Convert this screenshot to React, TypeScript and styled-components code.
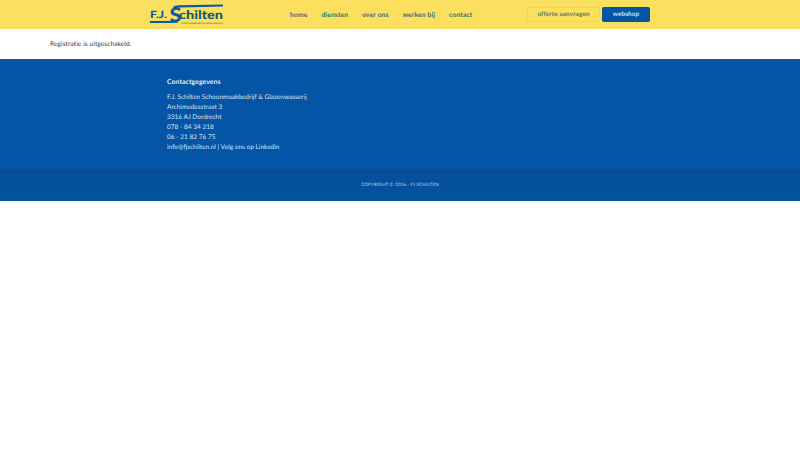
import React from 'react';
import styled, { createGlobalStyle } from 'styled-components';

const GlobalStyle = createGlobalStyle`
  html, body {
    margin: 0;
    padding: 0;
    background: #fff;
    font-family: "Lato", sans-serif;
    text-rendering: geometricPrecision;
  }
`;

const Header = styled.header`
  height: 29px;
  background: #fbe060;
  display: flex;
  justify-content: center;
`;

const HeaderInner = styled.div`
  width: 500px;
  display: flex;
  align-items: center;
`;

const LogoWrap = styled.a`
  display: block;
  width: 74px;
  height: 24px;
  margin-bottom: 1px;
`;

const Nav = styled.nav`
  display: flex;
  gap: 14px;
  margin-left: 66px;
`;

const NavLink = styled.a`
  font-size: 6.7px;
  font-weight: 700;
  letter-spacing: 0.15px;
  color: #33706f;
  white-space: nowrap;
`;

const Actions = styled.div`
  display: flex;
  gap: 2px;
  margin-left: auto;
`;

const ActionButton = styled.a<{ $primary?: boolean }>`
  width: ${(p) => (p.$primary ? '48px' : '73px')};
  height: 15px;
  display: flex;
  align-items: center;
  justify-content: center;
  border-radius: 2px;
  font-size: 6.4px;
  letter-spacing: 0.1px;
  font-weight: 700;
  white-space: nowrap;
  color: ${(p) => (p.$primary ? '#d5e3f1' : '#4f7a62')};
  background: ${(p) => (p.$primary ? '#0455a5' : 'transparent')};
  outline: ${(p) => (p.$primary ? 'none' : '1px solid #f3d658')};
  outline-offset: -1px;
`;

const Content = styled.main`
  height: 30px;
  padding-left: 50px;
  display: flex;
  align-items: center;
  font-size: 6.6px;
  letter-spacing: 0.07px;
  color: #3c3c3c;
`;

const Footer = styled.footer`
  background: #0455a5;
  height: 110px;
  padding: 18px 0 0 167px;
  box-sizing: border-box;
  color: #d5e3f1;
`;

const FooterTitle = styled.div`
  font-size: 6.8px;
  font-weight: 700;
  letter-spacing: 0.1px;
  line-height: 10px;
  color: #e6eff7;
  margin-bottom: 6px;
`;

const FooterLine = styled.div`
  font-size: 6.5px;
  line-height: 10px;
`;

const CopyrightBar = styled.div`
  height: 32px;
  padding-bottom: 1px;
  box-sizing: border-box;
  background: linear-gradient(#044d98, #0553a1);
  display: flex;
  align-items: center;
  justify-content: center;
  font-size: 4.5px;
  letter-spacing: 0.2px;
  color: #c2d7eb;
`;

function Logo() {
  return (
    <LogoWrap>
      <svg width="74" height="24" viewBox="0 0 74 24">
        <path d="M23 5 Q 25 3.5 29 3.2 L73 2.6 L73 4.4 L30 5.4 Q 26 5.8 24 7.5 Z" fill="#0a57a5" />
        <path d="M0 19 L21 19 Q 24 20.5 28 20.2 L28 21 L0 21 Z" fill="#0a57a5" />
        <text x="0" y="16" fontFamily="Lato" fontWeight="900" fontSize="10" fill="#0d5aa0" textLength="17" lengthAdjust="spacingAndGlyphs">F.J.</text>
        <text x="19.5" y="19.5" fontFamily="Lato" fontWeight="900" fontSize="20" fill="#0d5aa0" textLength="12" lengthAdjust="spacingAndGlyphs">S</text>
        <text x="29" y="16.5" fontFamily="Lato" fontWeight="900" fontSize="12" fill="#0f5c76" textLength="44" lengthAdjust="spacingAndGlyphs">chilten</text>
        <text x="31" y="21.5" fontFamily="Lato" fontWeight="400" fontSize="2.6" fill="#44504a">Schoonmaakbedrijf &amp; Glazenwasserij</text>
      </svg>
    </LogoWrap>
  );
}

const navItems = ['home', 'diensten', 'over ons', 'werken bij', 'contact'];

const contactLines = [
  'F.J. Schilten Schoonmaakbedrijf & Glazenwasserij',
  'Archimedesstraat 3',
  '3316 AJ Dordrecht',
  '078 - 84 34 218',
  '06 - 21 82 76 75',
  'info@fjschilten.nl | Volg ons op Linkedin',
];

export default function App() {
  return (
    <>
      <GlobalStyle />
      <Header>
        <HeaderInner>
          <Logo />
          <Nav>
            {navItems.map((item) => (
              <NavLink key={item}>{item}</NavLink>
            ))}
          </Nav>
          <Actions>
            <ActionButton>offerte aanvragen</ActionButton>
            <ActionButton $primary>webshop</ActionButton>
          </Actions>
        </HeaderInner>
      </Header>
      <Content>Registratie is uitgeschakeld.</Content>
      <Footer>
        <FooterTitle>Contactgegevens</FooterTitle>
        {contactLines.map((line) => (
          <FooterLine key={line}>{line}</FooterLine>
        ))}
      </Footer>
      <CopyrightBar>COPYRIGHT © 2026 - FJ SCHILTEN</CopyrightBar>
    </>
  );
}
